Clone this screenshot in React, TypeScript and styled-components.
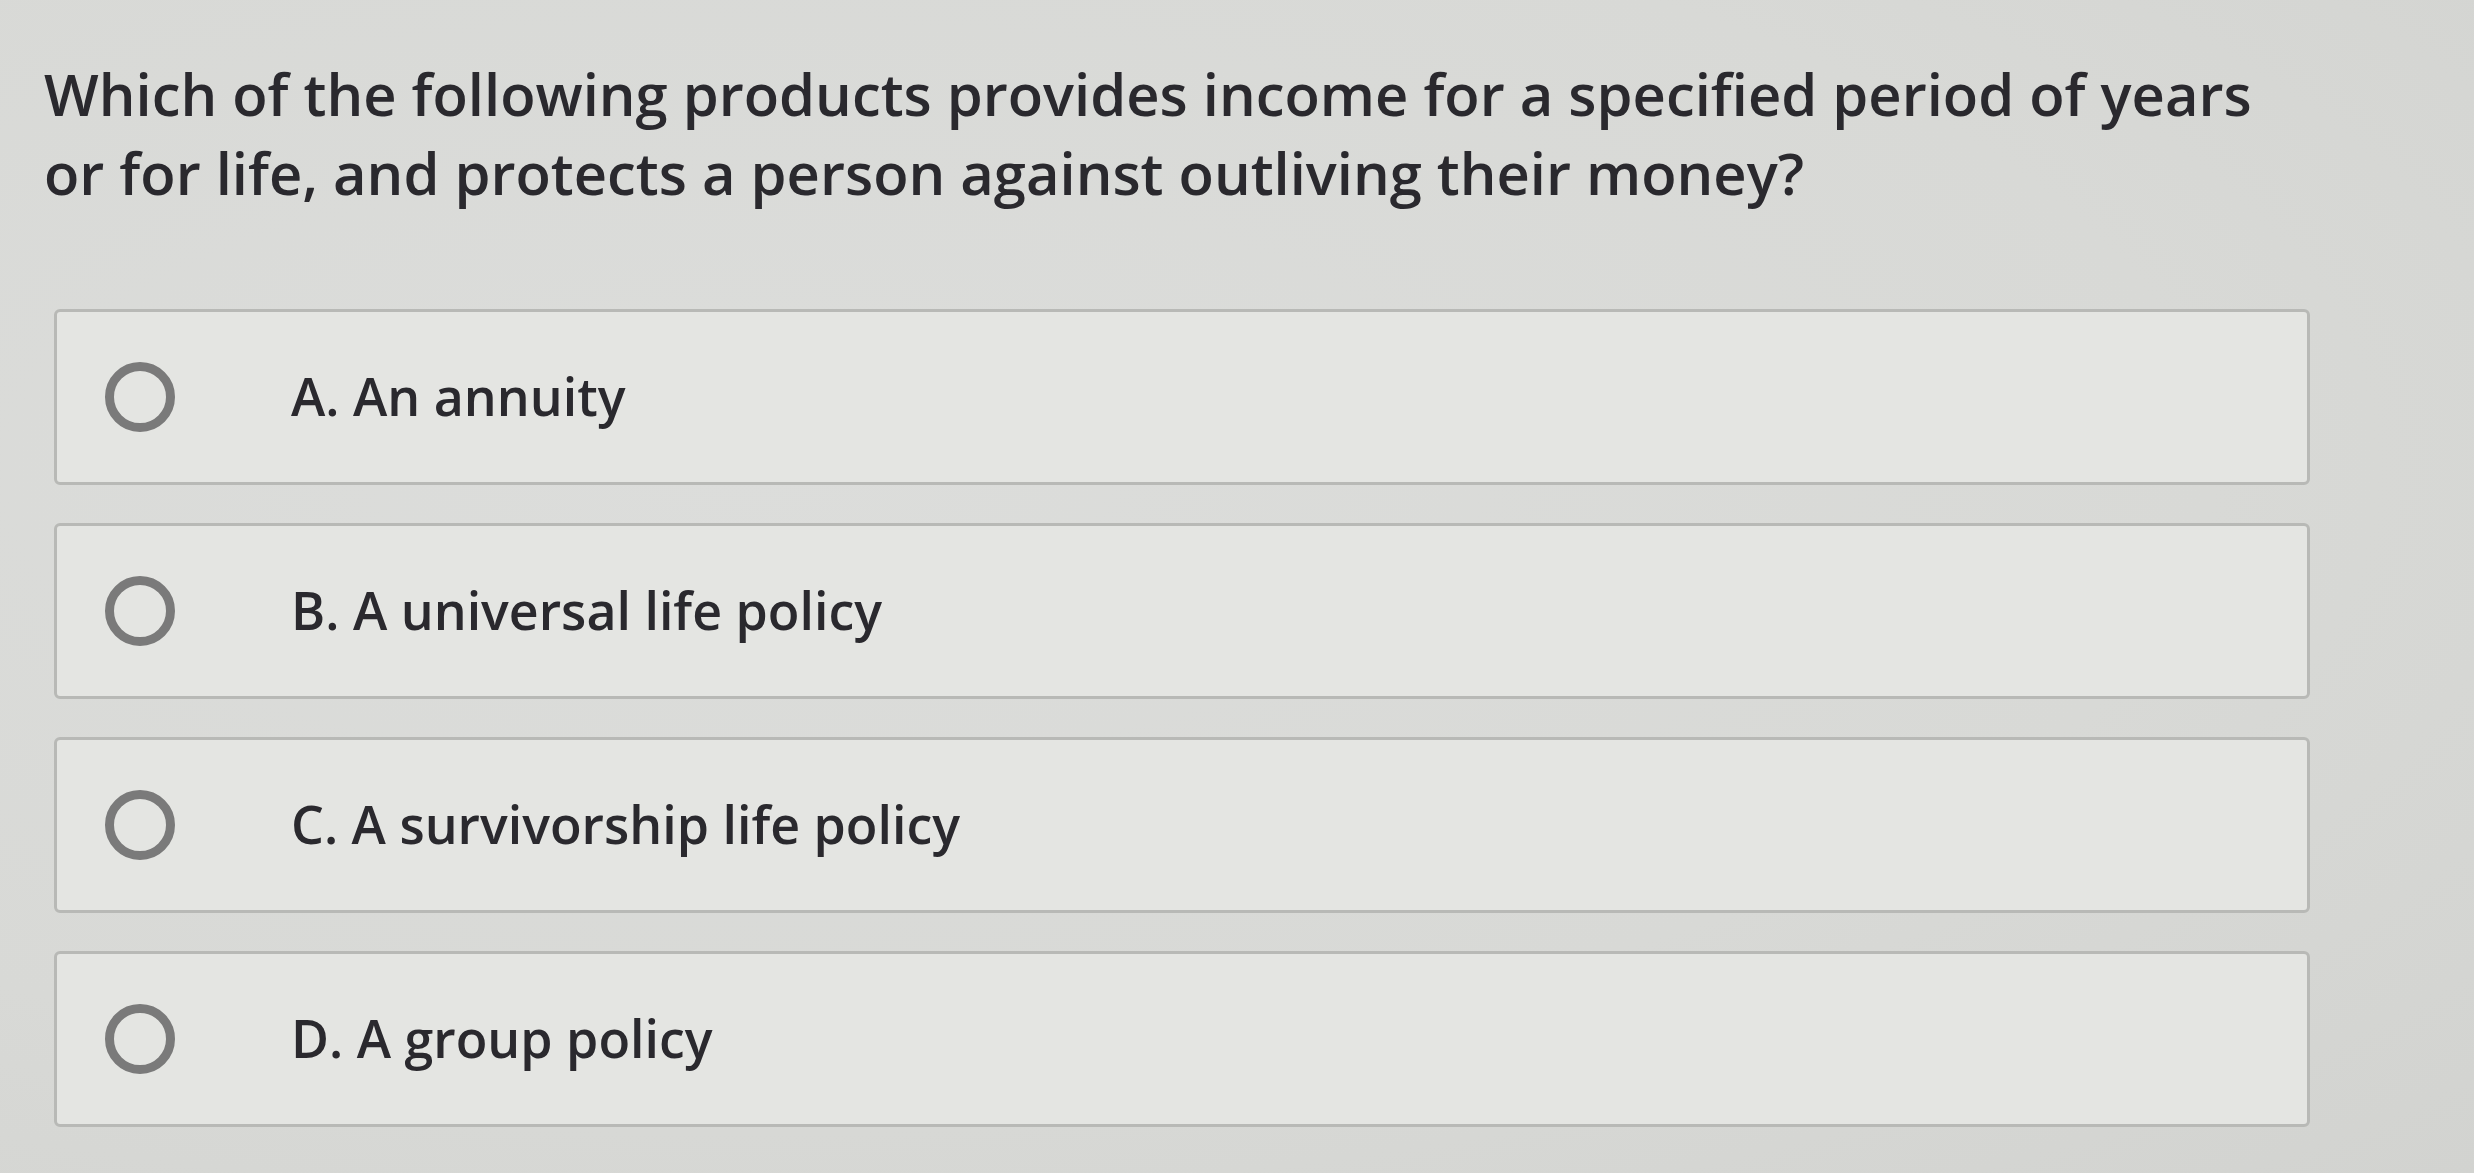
import styled, { createGlobalStyle } from 'styled-components';

const GlobalStyle = createGlobalStyle`
  html,
  body {
    margin: 0;
    padding: 0;
  }

  body {
    background: #d8d9d6;
    font-family: 'Open Sans', 'Noto Sans', sans-serif;
    color: #2a292e;
  }
`;

const options = [
  { letter: 'A', text: 'An annuity' },
  { letter: 'B', text: 'A universal life policy' },
  { letter: 'C', text: 'A survivorship life policy' },
  { letter: 'D', text: 'A group policy' },
];

export default function App() {
  return (
    <>
      <GlobalStyle />
      <Page>
        <Question>
          Which of the following products provides income for a specified
          period of years
          <br />
          or for life, and protects a person against outliving their money?
        </Question>
        <OptionList>
          {options.map((option) => (
            <Option key={option.letter}>
              <Radio />
              <OptionLabel>
                {option.letter}. {option.text}
              </OptionLabel>
            </Option>
          ))}
        </OptionList>
      </Page>
    </>
  );
}

const Page = styled.div`
  width: 2474px;
  height: 1173px;
  box-sizing: border-box;
  padding: 54px 0 0 44px;
  overflow: hidden;
  background: radial-gradient(
    ellipse at 30% 40%,
    #dcdddb 0%,
    #d8d9d6 60%,
    #d2d3d0 100%
  );
`;

const Question = styled.p`
  margin: 0;
  font-size: 57.9px;
  font-weight: 600;
  line-height: 79px;
  white-space: nowrap;
`;

const OptionList = styled.div`
  display: flex;
  flex-direction: column;
  gap: 38px;
  width: 2256px;
  margin: 97px 0 0 10px;
`;

const Option = styled.div`
  display: flex;
  align-items: center;
  height: 176px;
  box-sizing: border-box;
  padding-left: 48px;
  background: #e4e5e2;
  border: 3px solid #b8b9b6;
  border-radius: 6px;
`;

const Radio = styled.span`
  flex: none;
  width: 70px;
  height: 70px;
  box-sizing: border-box;
  border: 9px solid #7a7a7a;
  border-radius: 50%;
`;

const OptionLabel = styled.span`
  margin-left: 116px;
  font-size: 51.9px;
  font-weight: 600;
  line-height: 1;
`;
